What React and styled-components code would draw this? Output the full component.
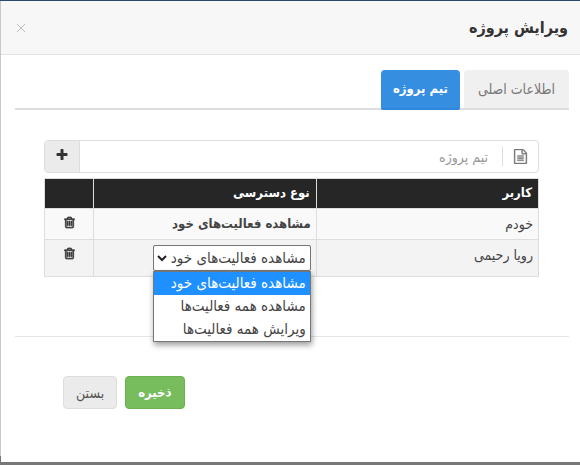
import React, { useState } from "react";
import styled, { createGlobalStyle } from "styled-components";

const accessTypes = [
  "مشاهده فعالیت‌های خود",
  "مشاهده همه فعالیت‌ها",
  "ویرایش همه فعالیت‌ها",
];

const icons = {
  plus: "M1600 736v192q0 40-28 68t-68 28h-416v416q0 40-28 68t-68 28h-192q-40 0-68-28t-28-68v-416h-416q-40 0-68-28t-28-68v-192q0-40 28-68t68-28h416v-416q0-40 28-68t68-28h192q40 0 68 28t28 68v416h416q40 0 68 28t28 68z",
  trash:
    "M704 736v576q0 14-9 23t-23 9h-64q-14 0-23-9t-9-23v-576q0-14 9-23t23-9h64q14 0 23 9t9 23zm256 0v576q0 14-9 23t-23 9h-64q-14 0-23-9t-9-23v-576q0-14 9-23t23-9h64q14 0 23 9t9 23zm256 0v576q0 14-9 23t-23 9h-64q-14 0-23-9t-9-23v-576q0-14 9-23t23-9h64q14 0 23 9t9 23zm128 724v-948h-896v948q0 22 7 40.5t14.5 27 10.5 8.5h832q3 0 10.5-8.5t14.5-27 7-40.5zm-672-1076h448l-48-117q-7-9-17-11h-317q-10 2-17 11zm928 32v64q0 14-9 23t-23 9h-96v948q0 83-47 143.5t-113 60.5h-832q-66 0-113-58.5t-47-141.5v-952h-96q-14 0-23-9t-9-23v-64q0-14 9-23t23-9h309l70-167q15-37 54-63t79-26h320q40 0 79 26t54 63l70 167h309q14 0 23 9t9 23z",
  file: "M1596 380q28 28 48 76t20 88v1152q0 40-28 68t-68 28h-1344q-40 0-68-28t-28-68v-1600q0-40 28-68t68-28h896q40 0 88 20t76 48zm-444-244v376h376q-10-29-22-41l-313-313q-12-12-41-22zm384 1528v-1024h-416q-40 0-68-28t-28-68v-416h-768v1536h1280zm-1024-864q0-14 9-23t23-9h704q14 0 23 9t9 23v64q0 14-9 23t-23 9h-704q-14 0-23-9t-9-23v-64zm736 224q14 0 23 9t9 23v64q0 14-9 23t-23 9h-704q-14 0-23-9t-9-23v-64q0-14 9-23t23-9h704zm0 256q14 0 23 9t9 23v64q0 14-9 23t-23 9h-704q-14 0-23-9t-9-23v-64q0-14 9-23t23-9h704z",
};

const Icon = ({ name, size, stroke = 0 }) => (
  <svg
    width={size}
    height={size}
    viewBox="0 0 1792 1792"
    fill="currentColor"
    stroke="currentColor"
    strokeWidth={stroke}
    aria-hidden="true"
  >
    <path d={icons[name]} />
  </svg>
);

const AccessSelect = () => {
  const [value, setValue] = useState(accessTypes[0]);

  return (
    <SelectBox>
      <Select
        aria-label="نوع دسترسی"
        value={value}
        onChange={(e) => setValue(e.target.value)}
      >
        {accessTypes.map((type) => (
          <option key={type}>{type}</option>
        ))}
      </Select>
      <Chevron width="10" height="8" viewBox="0 0 10 8" aria-hidden="true">
        <path d="M1 2l4 4 4-4" fill="none" stroke="#222" strokeWidth="2" />
      </Chevron>
      <Options role="listbox" aria-label="نوع دسترسی">
        {accessTypes.map((type) => (
          <Option
            key={type}
            role="option"
            aria-selected={type === value}
            $active={type === value}
            onClick={() => setValue(type)}
          >
            {type}
          </Option>
        ))}
      </Options>
    </SelectBox>
  );
};

const App = () => {
  return (
    <Page dir="rtl" lang="fa">
      <GlobalStyle />
      <Modal role="dialog" aria-labelledby="modal-title">
        <Header>
          <Title id="modal-title">ویرایش پروژه</Title>
          <CloseButton type="button" aria-label="بستن پنجره">
            <svg width="10" height="10" viewBox="0 0 10 10" aria-hidden="true">
              <path d="M1 1l8 8M9 1l-8 8" stroke="currentColor" />
            </svg>
          </CloseButton>
        </Header>
        <Body>
          <Tabs role="tablist">
            <Tab type="button" role="tab" aria-selected="false">
              اطلاعات اصلی
            </Tab>
            <Tab type="button" role="tab" aria-selected="true" $active>
              تیم پروژه
            </Tab>
          </Tabs>
          <Panel role="tabpanel">
            <Field>
              <FieldIcon>
                <Icon name="file" size={15} stroke={40} />
              </FieldIcon>
              <Input aria-label="تیم پروژه" placeholder="تیم پروژه" />
              <AddButton type="button" aria-label="افزودن">
                <Icon name="plus" size={14} />
              </AddButton>
            </Field>
            <Table>
              <thead>
                <tr>
                  <Th $width="45%">کاربر</Th>
                  <Th $width="45%">نوع دسترسی</Th>
                  <Th $width="10%" />
                </tr>
              </thead>
              <tbody>
                <Row>
                  <Td>خودم</Td>
                  <Td $strong>مشاهده فعالیت‌های خود</Td>
                  <Td $center>
                    <DeleteButton type="button" aria-label="حذف خودم">
                      <Icon name="trash" size={13} stroke={90} />
                    </DeleteButton>
                  </Td>
                </Row>
                <Row $shaded>
                  <Td>رویا رحیمی</Td>
                  <Td>
                    <AccessSelect />
                  </Td>
                  <Td $center>
                    <DeleteButton type="button" aria-label="حذف رویا رحیمی">
                      <Icon name="trash" size={13} stroke={90} />
                    </DeleteButton>
                  </Td>
                </Row>
              </tbody>
            </Table>
          </Panel>
          <Divider />
          <Footer>
            <Button type="button" $primary>
              ذخیره
            </Button>
            <Button type="button">بستن</Button>
          </Footer>
        </Body>
      </Modal>
    </Page>
  );
};

export default App;

const GlobalStyle = createGlobalStyle`
  * {
    box-sizing: border-box;
  }

  body {
    margin: 0;
    color: #444;
    font-family: "DejaVu Sans Condensed", "DejaVu Sans", sans-serif;
    font-size: 14px;
    line-height: 20px;
  }

  button,
  input,
  select {
    color: inherit;
    font: inherit;
  }
`;

const Page = styled.div`
  display: flex;
  flex-direction: column;
  min-height: 100vh;
  padding: 0 0 3px 1px;
  border-top: 1px solid #2f4a70;
  background: linear-gradient(#c8c8c8 98%, #777 98%);
`;

const Modal = styled.div`
  display: flex;
  flex: 1;
  flex-direction: column;
  background: #fff;
`;

const Header = styled.div`
  display: flex;
  align-items: center;
  justify-content: space-between;
  height: 54px;
  padding: 0 12px 0 13px;
  border-bottom: 1px solid #e2e2e2;
  background: #f7f7f7;
`;

const Title = styled.h1`
  margin: 0;
  color: #333;
  font-size: 16px;
  font-weight: 700;
  line-height: 24px;
`;

const CloseButton = styled.button`
  display: flex;
  padding: 2px;
  border: 0;
  background: none;
  color: #bbb;
  cursor: pointer;
`;

const Body = styled.div`
  padding: 15px 11px 0 14px;
`;

const Tabs = styled.div`
  display: flex;
  gap: 4px;
  border-bottom: 2px solid #ddd;
`;

const Tab = styled.button`
  height: 40px;
  margin-bottom: -2px;
  padding: ${({ $active }) => ($active ? "0 12px" : "0 14px")};
  border: 0;
  border-bottom: 2px solid ${({ $active }) => ($active ? "#2e86dc" : "#ddd")};
  border-radius: 4px 4px 2px 2px;
  background: ${({ $active }) => ($active ? "#368ee0" : "#f0f0f0")};
  color: ${({ $active }) => ($active ? "#fff" : "#777")};
  font-size: ${({ $active }) => ($active ? "13px" : "14px")};
  font-weight: ${({ $active }) => ($active ? 700 : 400)};
  cursor: pointer;
`;

const Panel = styled.div`
  padding: 30px 30px 0 29px;
`;

const Field = styled.div`
  display: flex;
  height: 33px;
  margin-bottom: 5px;
  border: 1px solid #ddd;
  border-radius: 4px;
  overflow: hidden;
`;

const FieldIcon = styled.span`
  display: flex;
  align-items: center;
  margin: 6px 0;
  padding: 0 10px;
  border-left: 1px solid #ddd;
  color: #777;
`;

const Input = styled.input`
  flex: 1;
  min-width: 0;
  padding: 0 14px;
  border: 0;
  background: none;
  outline: 0;

  &::placeholder {
    color: #999;
    opacity: 1;
  }
`;

const AddButton = styled.button`
  display: flex;
  align-items: center;
  justify-content: center;
  width: 35px;
  padding: 0 0 4px;
  border: 0;
  border-right: 1px solid #ddd;
  background: #ebebeb;
  color: #333;
  cursor: pointer;
`;

const Table = styled.table`
  width: 100%;
  border-collapse: collapse;
  table-layout: fixed;
`;

const Th = styled.th`
  width: ${({ $width }) => $width};
  height: 30px;
  padding: 0 6px 2px;
  border: 1px solid #ddd;
  background: #262626;
  color: #fff;
  font-size: 13px;
  text-align: right;
`;

const Row = styled.tr`
  background: ${({ $shaded }) => ($shaded ? "#f3f3f3" : "#f9f9f9")};
`;

const Td = styled.td`
  padding: 5px;
  border: 1px solid #ddd;
  font-size: ${({ $strong }) => ($strong ? "13px" : "14px")};
  font-weight: ${({ $strong }) => ($strong ? 700 : 400)};
  text-align: ${({ $center }) => ($center ? "center" : "right")};
  vertical-align: top;
`;

const DeleteButton = styled.button`
  padding: 0;
  border: 0;
  background: none;
  color: #333;
  line-height: 16px;
  cursor: pointer;
`;

const SelectBox = styled.div`
  position: relative;
  width: 158px;
  font-size: 15px;
`;

const Select = styled.select`
  display: block;
  width: 100%;
  height: 26px;
  padding: 0 4px 0 16px;
  border: 1px solid #767676;
  border-radius: 2px;
  background: #fff;
  appearance: none;
`;

const Chevron = styled.svg`
  position: absolute;
  top: 9px;
  left: 4px;
  pointer-events: none;
`;

const Options = styled.ul`
  position: absolute;
  z-index: 1;
  top: 100%;
  right: 0;
  left: 0;
  margin: 0;
  padding: 0;
  border: 1px solid #777;
  background: #fff;
  box-shadow: 1px 3px 6px rgba(0, 0, 0, 0.4);
  list-style: none;
`;

const Option = styled.li`
  padding: 0 4px;
  background: ${({ $active }) => ($active ? "#1e90ff" : "#fff")};
  color: ${({ $active }) => ($active ? "#fff" : "#444")};
  line-height: 23px;
  white-space: nowrap;
  cursor: default;
`;

const Divider = styled.hr`
  margin: 59px 0 0;
  border: 0;
  border-top: 1px solid #e5e5e5;
`;

const Footer = styled.div`
  display: flex;
  justify-content: flex-end;
  gap: 8px;
  padding: 39px 48px 52px;
`;

const Button = styled.button`
  height: 33px;
  padding: 0 12px;
  border: 1px solid ${({ $primary }) => ($primary ? "#6bb152" : "#ddd")};
  border-radius: 4px;
  background: ${({ $primary }) => ($primary ? "#77bd5e" : "#ebebeb")};
  color: ${({ $primary }) => ($primary ? "#fff" : "#555")};
  font-size: ${({ $primary }) => ($primary ? "13px" : "14px")};
  font-weight: ${({ $primary }) => ($primary ? 700 : 400)};
  cursor: pointer;
`;
